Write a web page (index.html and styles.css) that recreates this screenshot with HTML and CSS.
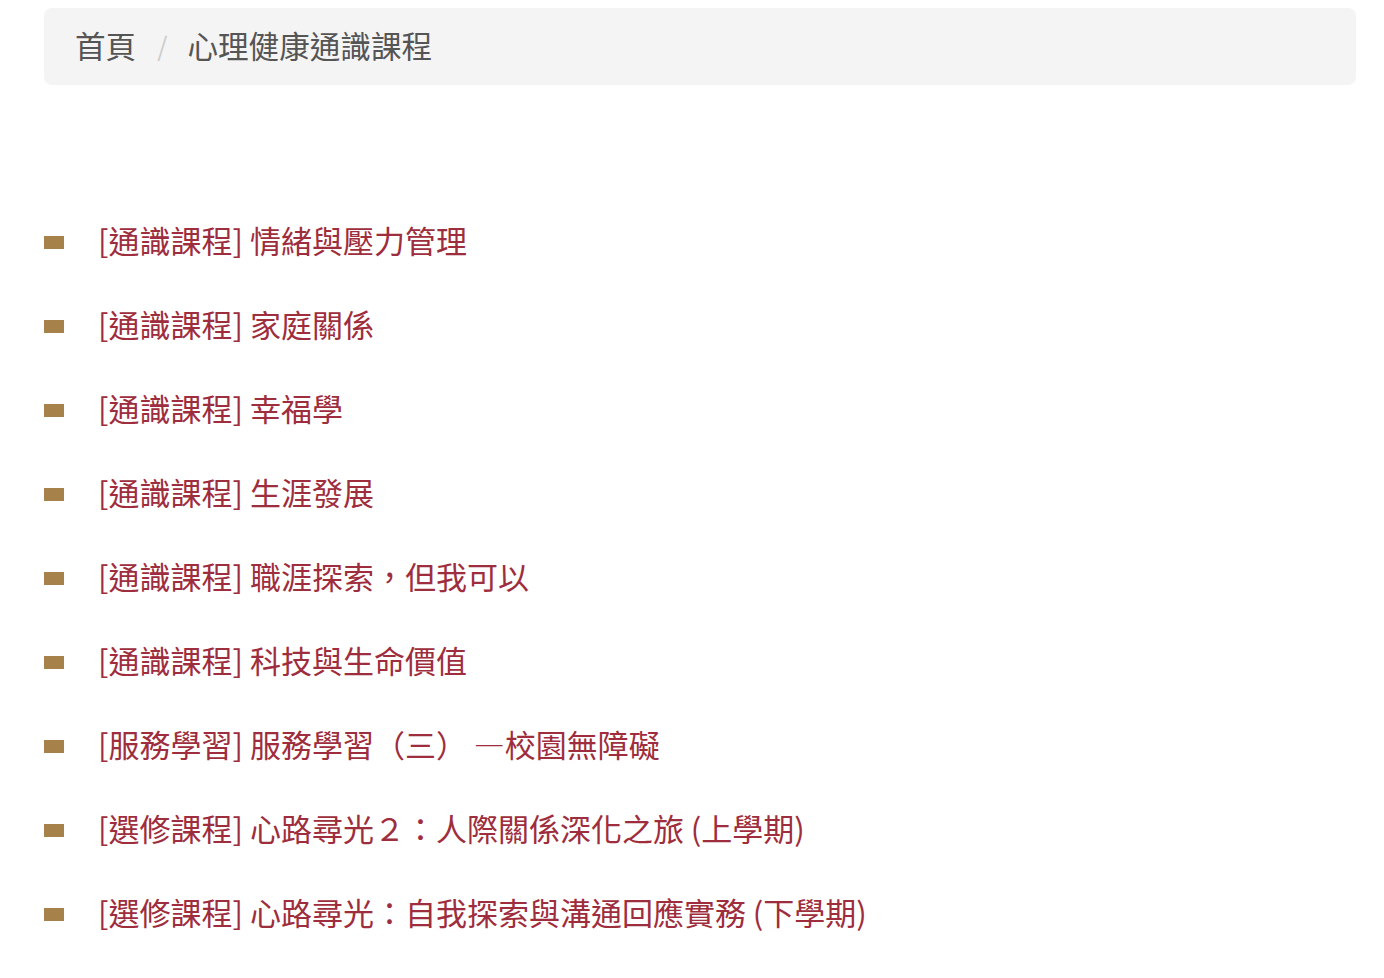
FILE: index.html
```html
<!DOCTYPE html>
<html lang="zh-Hant">
<head>
    <meta charset="UTF-8">
    <meta name="viewport" content="width=device-width, initial-scale=1.0">
    <title>心理健康通識課程</title>
    <link rel="stylesheet" href="styles.css">
</head>
<body>
    <div class="page">
        <nav class="breadcrumb">
            <a href="#" class="crumb">首頁</a>
            <span class="sep">/</span>
            <span class="crumb current">心理健康通識課程</span>
        </nav>

        <ul class="course-list">
            <li><a href="#">[通識課程] 情緒與壓力管理</a></li>
            <li><a href="#">[通識課程] 家庭關係</a></li>
            <li><a href="#">[通識課程] 幸福學</a></li>
            <li><a href="#">[通識課程] 生涯發展</a></li>
            <li><a href="#">[通識課程] 職涯探索，但我可以</a></li>
            <li><a href="#">[通識課程] 科技與生命價值</a></li>
            <li><a href="#">[服務學習] 服務學習（三） —校園無障礙</a></li>
            <li><a href="#">[選修課程] 心路尋光２：人際關係深化之旅 (上學期)</a></li>
            <li><a href="#">[選修課程] 心路尋光：自我探索與溝通回應實務 (下學期)</a></li>
        </ul>
    </div>
</body>
</html>
```

FILE: styles.css
```css
body {
    margin: 0;
    background: #fff;
    font-family: "Noto Sans CJK TC", "Noto Sans", sans-serif;
}
.page {
    padding: 8px 28px 0 44px;
}
.breadcrumb {
    background: #f4f4f4;
    border-radius: 8px;
    height: 77px;
    padding: 0 31px 4px;
    box-sizing: border-box;
    display: flex;
    align-items: center;
    font-size: 30.6px;
    color: #555;
}
.crumb {
    color: #555;
    text-decoration: none;
}
.sep {
    color: #ccc;
    font-size: 26px;
    margin: 0 20px 0 21px;
}
.course-list {
    list-style: none;
    margin: 115px 0 0 0;
    padding: 0;
}
.course-list li {
    display: flex;
    align-items: center;
    height: 84px;
    gap: 34px;
}
.course-list li::before {
    content: "";
    width: 20px;
    height: 13px;
    background: #a6824a;
    flex: none;
}
.course-list a {
    color: #9e2d3d;
    text-decoration: none;
    font-size: 31px;
    line-height: 44px;
    padding-bottom: 5px;
}
```
